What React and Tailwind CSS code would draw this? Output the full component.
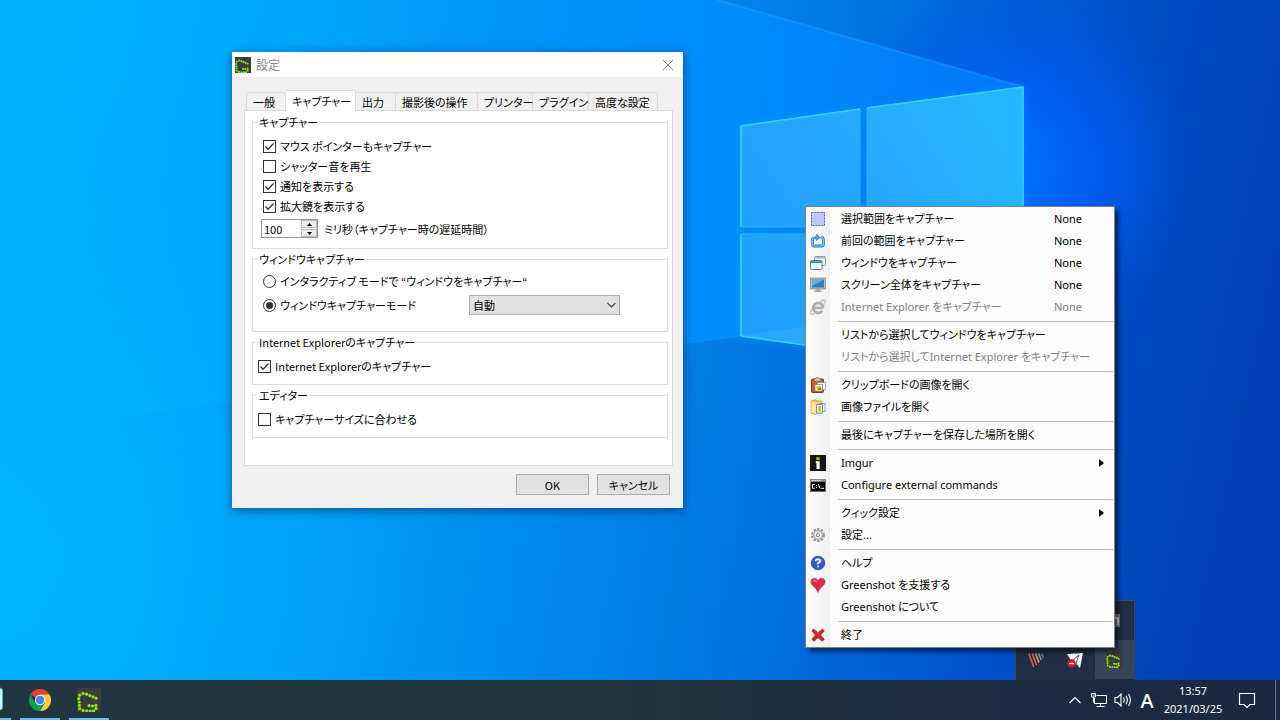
import React, { useState } from "react";

const UI = "font-['Noto_Sans_CJK_JP',sans-serif] [font-feature-settings:'palt']";
const MENU = "font-['Noto_Sans','Noto_Sans_CJK_JP',sans-serif] [font-feature-settings:'palt']";

function Wallpaper() {
  return (
    <svg className="absolute inset-0 h-full w-full" viewBox="0 0 1280 720" preserveAspectRatio="xMidYMid slice" aria-hidden="true">
      <defs>
        <linearGradient id="base" x1="0" y1="0.3" x2="1" y2="0.42">
          <stop offset="0" stopColor="#00b2fe" />
          <stop offset="0.2" stopColor="#00a6fa" />
          <stop offset="0.45" stopColor="#008ef2" />
          <stop offset="0.62" stopColor="#0078e6" />
          <stop offset="0.82" stopColor="#0050cc" />
          <stop offset="1" stopColor="#0040b4" />
        </linearGradient>
        <radialGradient id="glow" gradientUnits="userSpaceOnUse" cx="1010" cy="170" r="190">
          <stop offset="0" stopColor="#0070ff" />
          <stop offset="0.4" stopColor="#0064ff" stopOpacity="0.75" />
          <stop offset="1" stopColor="#0054e0" stopOpacity="0" />
        </radialGradient>
        <radialGradient id="corner" gradientUnits="userSpaceOnUse" cx="0" cy="560" r="520">
          <stop offset="0" stopColor="#00b8ff" />
          <stop offset="1" stopColor="#00a8f8" stopOpacity="0" />
        </radialGradient>
        <linearGradient id="beam" gradientUnits="userSpaceOnUse" x1="300" y1="0" x2="1023" y2="0">
          <stop offset="0" stopColor="#0098ff" stopOpacity="0" />
          <stop offset="0.5" stopColor="#0092ff" stopOpacity="0.8" />
          <stop offset="1" stopColor="#0080ff" stopOpacity="0.7" />
        </linearGradient>
        <linearGradient id="floor" gradientUnits="userSpaceOnUse" x1="0" y1="0" x2="1100" y2="0">
          <stop offset="0" stopColor="#00a0f8" stopOpacity="0.05" />
          <stop offset="0.6" stopColor="#0078dc" stopOpacity="0.25" />
          <stop offset="1" stopColor="#0058cc" stopOpacity="0" />
        </linearGradient>
        <linearGradient id="pane" gradientUnits="userSpaceOnUse" x1="740" y1="340" x2="1023" y2="150">
          <stop offset="0" stopColor="#1e9fff" />
          <stop offset="0.5" stopColor="#24a6ff" />
          <stop offset="1" stopColor="#26b6ff" />
        </linearGradient>
        <filter id="soft" x="-20%" y="-20%" width="140%" height="140%"><feGaussianBlur stdDeviation="3" /></filter>
      </defs>
      <rect width="1280" height="720" fill="url(#base)" />
      <rect width="1280" height="720" fill="url(#corner)" />
      <rect width="1280" height="720" fill="url(#glow)" />
      <path d="M300 0H717L1023 87V240L741 336 300 392Z" fill="url(#beam)" />
      <path d="M0 430 741 336 1023 376 1280 720H0Z" fill="url(#floor)" />
      <path d="M717 0 1023 87" stroke="#1f9cff" strokeWidth="2" opacity="0.5" />
      <path d="M0 430 741 336" stroke="#18b4ff" strokeWidth="1.5" opacity="0.25" />
      <path d="M741 126 1023 87V376L741 336Z" fill="none" stroke="#20b8ff" strokeWidth="4" opacity="0.3" filter="url(#soft)" />
      <path d="M741 126 860 109V227H741Z M867 108 1023 87V227H867Z M741 234H860V353L741 336Z M867 234H1023V376L867 354Z" fill="url(#pane)" stroke="#27b8ff" strokeWidth="1" />
      <path d="M741 336 861 318V353Z" fill="#46c0ff" opacity="0.25" />
      <path d="M741 227V126L860 109M741 336V234M867 108 1023 87V231M741 336 861 353" fill="none" stroke="#32d4ff" strokeWidth="1.500" />
    </svg>
  );
}

function GreenshotIcon({ className }) {
  const dots = [[6, 5.4], [9.6, 6.2], [12.8, 7.6], [16, 8.8], [19, 10.2], [2.6, 7.2], [1.8, 10.6], [2.2, 14], [2.4, 17.4], [2.6, 20.6], [6, 22.4], [9.6, 22.8], [13.2, 23], [16.6, 22.8], [19, 20.4], [12, 17.6], [15.4, 18], [18.8, 17.4]];
  return (
    <svg className={className} viewBox="0 0 24 24" aria-hidden="true">
      <rect width="24" height="24" fill="#3c3d3b" />
      <g fill="#86e810">{dots.map(([x, y]) => <circle key={x + "-" + y} cx={x} cy={y} r="1.6" />)}</g>
    </svg>
  );
}

function Check({ label, checked }) {
  return (
    <label className="flex h-5 items-center gap-1">
      <span className="grid h-[13px] w-[13px]">
        <input type="checkbox" defaultChecked={checked} className="peer col-start-1 row-start-1 m-0 h-[13px] w-[13px] appearance-none border border-[#333] bg-white" />
        <svg className="pointer-events-none invisible col-start-1 row-start-1 h-[13px] w-[13px] peer-checked:visible" viewBox="0 0 13 13" fill="none" stroke="#333" strokeWidth="1.3" aria-hidden="true"><path d="M2.500 6.500 5 9.200 10.500 3.500" /></svg>
      </span>
      <span>{label}</span>
    </label>
  );
}

function Radio({ label, value, checked }) {
  return (
    <label className="flex h-6 items-center gap-1">
      <span className="grid h-[13px] w-[13px]">
        <input type="radio" name="window-mode" value={value} defaultChecked={checked} className="peer col-start-1 row-start-1 m-0 h-[13px] w-[13px] appearance-none rounded-full border border-[#333] bg-white" />
        <span className="pointer-events-none invisible col-start-1 row-start-1 m-auto h-[7px] w-[7px] rounded-full bg-[#333] peer-checked:visible" />
      </span>
      <span>{label}</span>
    </label>
  );
}

function Group({ title, className, children }) {
  return (
    <fieldset className="min-w-0 border border-[#dcdcdc]">
      <legend className="ml-[5px] px-px leading-3">{title}</legend>
      <div className={className}>{children}</div>
    </fieldset>
  );
}

const TABS = [
  ["一般", "w-[40px]"],
  ["キャプチャー", "w-[70px]"],
  ["出力", "w-[40px]"],
  ["撮影後の操作", "w-[82px]"],
  ["プリンター", "w-[55px]"],
  ["プラグイン", "w-[56px]"],
  ["高度な設定", "w-[69px]"],
];

function SettingsDialog() {
  const [delay, setDelay] = useState(100);
  const [tab, setTab] = useState("キャプチャー");
  return (
    <section role="dialog" aria-label="設定" className={"absolute left-[232px] top-[52px] w-[451px] bg-[#f0f0f0] text-[11px] text-black shadow-[0_2px_10px_rgba(0,20,60,0.55)] " + UI}>
      <header className="flex h-[25px] items-center bg-white px-[3px] text-[#8a8a8a]">
        <GreenshotIcon className="h-4 w-4" />
        <h1 className="ml-[5px] flex-1 text-xs">設定</h1>
        <button type="button" aria-label="閉じる" className="mr-[6px] h-3 w-3">
          <svg className="h-3 w-3" viewBox="0 0 12 12" fill="none" stroke="#888" aria-hidden="true"><path d="m1 1 10 10M11 1 1 11" /></svg>
        </button>
      </header>
      <div className="pb-[13px] pl-3 pr-[10px] pt-[13px]">
        <div role="tablist" className="flex h-5 items-end pl-[2px]">
          {TABS.map(([name, width]) => (
            <button key={name} type="button" role="tab" aria-selected={tab === name} onClick={() => setTab(name)}
              className={width + " shrink-0 whitespace-nowrap border-t border-r border-[#dadada] pl-[6px] text-left leading-4 first:border-l " + (tab === name ? "-mb-px h-[21px] bg-white" : "h-[18px]")}>
              {name}
            </button>
          ))}
        </div>
        <div role="tabpanel" className="flex flex-col gap-1 border border-[#dadada] bg-white pb-[27px] pl-[7px] pr-1 pt-[5px]">
          <Group title="キャプチャー" className="pb-[10px] pl-[10px] pt-2">
            <Check label="マウス ポインターもキャプチャー" checked />
            <Check label="シャッター音を再生" />
            <Check label="通知を表示する" checked />
            <Check label="拡大鏡を表示する" checked />
            <div className="-ml-[2px] mt-[3px] flex items-center">
              <div className="flex h-[19px] w-[57px] border border-[#999] bg-white">
                <input id="delay" type="number" value={delay} onChange={(e) => setDelay(Number(e.target.value))} className="min-w-0 flex-1 bg-transparent pl-[2px] leading-4 outline-none [appearance:textfield] [&::-webkit-inner-spin-button]:appearance-none" />
                <div className="flex w-4 flex-col gap-px">
                  <button type="button" aria-label="増やす" onClick={() => setDelay(delay + 1)} className="flex flex-1 items-center justify-center border border-[#b8b8b8] bg-[#ececec]"><svg className="h-[3px] w-[5px]" viewBox="0 0 5 3" aria-hidden="true"><path d="M0 3 2.500 0 5 3Z" /></svg></button>
                  <button type="button" aria-label="減らす" onClick={() => setDelay(delay - 1)} className="flex flex-1 items-center justify-center border border-[#b8b8b8] bg-[#ececec]"><svg className="h-[3px] w-[5px]" viewBox="0 0 5 3" aria-hidden="true"><path d="M0 0 2.500 3 5 0Z" /></svg></button>
                </div>
              </div>
              <label htmlFor="delay" className="ml-[6px] leading-4">ミリ秒（キャプチャー時の遅延時間）</label>
            </div>
          </Group>
          <Group title="ウィンドウキャプチャー" className="pb-[14px] pl-[10px] pr-[47px] pt-1">
            <Radio value="interactive" label="インタラクティブ モードで “ウィンドウをキャプチャー“" />
            <div className="flex items-center justify-between">
              <Radio value="auto" label="ウィンドウキャプチャーモード" checked />
              <div className="grid h-5 w-[151px]">
                <select aria-label="ウィンドウキャプチャーモード" className="col-start-1 row-start-1 appearance-none border border-[#adadad] bg-[#e1e1e1] pl-[3px] leading-4">
                  <option>自動</option>
                </select>
                <svg className="pointer-events-none col-start-1 row-start-1 mr-1 h-[6px] w-[9px] self-center justify-self-end" viewBox="0 0 9 6" fill="none" stroke="#444" strokeWidth="1.100" aria-hidden="true"><path d="m.5 1 4 4 4-4" /></svg>
              </div>
            </div>
          </Group>
          <Group title="Internet Explorerのキャプチャー" className="pb-2 pl-[5px] pt-2">
            <Check label="Internet Explorerのキャプチャー" checked />
          </Group>
          <Group title="エディター" className="pb-2 pl-[5px] pt-2">
            <Check label="キャプチャーサイズに合わせる" />
          </Group>
        </div>
        <div className="mt-2 flex justify-end gap-2 pr-[3px]">
          <button type="button" className="h-[21px] w-[73px] border border-[#adadad] bg-[#e1e1e1] leading-4">OK</button>
          <button type="button" className="h-[21px] w-[73px] border border-[#adadad] bg-[#e1e1e1] leading-4">キャンセル</button>
        </div>
      </div>
    </section>
  );
}

const ic = "h-4 w-4";
const ICONS = {
  region: (
    <svg className={ic} viewBox="0 0 16 16"><rect x="1.500" y="1.500" width="13" height="13" fill="#bccaf6" stroke="#4a5cc8" strokeDasharray="2 1" /></svg>
  ),
  last: (
    <svg className={ic} viewBox="0 0 16 16" fill="none">
      <path d="M3.600 5.200Q2.600 5.200 2.600 6.400V11.200Q2.600 13 4.400 13H11.600Q13.400 13 13.400 11.200V6.400Q13.400 4.800 11.800 4.600" stroke="#2f7fc0" strokeWidth="2.800" strokeLinecap="round" />
      <path d="M3.600 5.200Q2.600 5.200 2.600 6.400V11.200Q2.600 13 4.400 13H11.600Q13.400 13 13.400 11.200V6.400Q13.400 4.800 11.800 4.600" stroke="#86c8f2" strokeWidth="1.200" strokeLinecap="round" />
      <path d="M3.800 5.800Q4.500 3.300 6.500 3.300V1.200L10 4.400 6.500 7.600V5.800Q5 5.600 3.800 5.800Z" fill="#4a9cd8" stroke="#2f7fc0" strokeWidth=".7" />
    </svg>
  ),
  window: (
    <svg className={ic} viewBox="0 0 16 16">
      <rect x="4.500" y="1.500" width="11" height="9" rx="1" fill="#f4f4f4" stroke="#8e9aa2" /><path d="M5 2h10v1.500H5z" fill="#b4bcc2" />
      <rect x=".5" y="5.500" width="11.500" height="9" rx="1" fill="#f4faff" stroke="#4384b4" /><path d="M.500 5.500h11.500v2.500H.500z" fill="#3b96d4" />
    </svg>
  ),
  screen: (
    <svg className={ic} viewBox="0 0 16 16">
      <rect x=".5" y="1" width="15" height="11" fill="#b9bdc0" stroke="#8a8e92" strokeWidth=".8" />
      <rect x="2" y="2.500" width="12" height="8" fill="#2f82c0" /><path d="M2 2.500h12L2 9z" fill="#68b0e0" />
      <path d="M6.500 12h3v1.500h2V15h-7v-1.500h2z" fill="#9a9da0" />
    </svg>
  ),
  ie: (
    <svg className={ic} viewBox="0 0 16 16" fill="none">
      <path d="M13.400 8.800H4.400M13.200 8.800A5 5 0 1 0 12.300 11.800" stroke="#adadad" strokeWidth="2.800" />
      <path d="M10.500 2.400Q15 .2 15.200 2 15.300 3.300 13.800 5.500M3 8.500Q-.8 14.400 1.200 15.200 3 15.600 6.500 13.500" stroke="#bdbdbd" strokeWidth="1.400" />
    </svg>
  ),
  clipboard: (
    <svg className={ic} viewBox="0 0 16 16">
      <rect x="1.500" y="2" width="12" height="13.500" rx="1" fill="#b0602c" stroke="#7c3c18" /><path d="M4.500 1.500h2V.5h2v1h2v2.500h-6z" fill="#c8ccd0" stroke="#777" strokeWidth=".6" />
      <path d="M3.500 4.500h8v9h-8z" fill="#b8683a" />
      <path d="M7.500 5.500h8v7h-8z" fill="#fff" stroke="#758aa0" strokeWidth=".7" /><path d="M5 7.500h7.500v6.500H5z" fill="#fff" stroke="#777" strokeWidth=".7" /><path d="M6.300 8.800h5v4h-5z" fill="#f0c428" /><path d="M9 10.600h2.300v2.200H8z" fill="#4f8a3c" />
    </svg>
  ),
  folder: (
    <svg className={ic} viewBox="0 0 16 16">
      <path d="M1 2 6 .8V2h6v12H6v1.500L1 14z" fill="#f4cf6a" stroke="#c49a34" strokeWidth=".8" /><path d="M1.500 2.500 6 4.500v10.500L1.500 13.500z" fill="#ffe79c" />
      <path d="M9 4.500h6v8H9z" fill="#fff" stroke="#5b8ab4" strokeWidth=".8" /><path d="M6.500 5.500h6V14h-6z" fill="#fff" stroke="#4f7fa8" strokeWidth=".8" /><path d="M7.800 7h3.400v5.800H7.800z" fill="#f0c428" />
    </svg>
  ),
  imgur: (
    <svg className={ic} viewBox="0 0 16 16"><rect width="16" height="16" fill="#161616" /><circle cx="8" cy="3.600" r="1.900" fill="#85bf25" /><path d="M5.800 6.300h3.900v7.700H6.500V8.200h-.7z" fill="#fff" /></svg>
  ),
  cmd: (
    <svg className={ic} viewBox="0 0 16 16">
      <rect x=".4" y="2.400" width="15.200" height="12.200" fill="#000" stroke="#777" strokeWidth=".8" /><path d="M.8 2.800h14.400v1.800H.8z" fill="#c9ced4" /><path d="M11.500 3.100h1v1h-1zM13.500 3.100h1v1h-1z" fill="#555" />
      <path d="M4.800 7.500H2.500v3.800h2.300M6.500 8v.9M6.500 10.200v.9M8.300 7l1.700 4.500M11 11.300h3" fill="none" stroke="#fff" />
    </svg>
  ),
  gear: (
    <svg className={ic} viewBox="0 0 16 16" fill="none">
      <circle cx="8" cy="8" r="6" stroke="#8d9094" strokeWidth="1.800" strokeDasharray="2.400 1.400" /><circle cx="8" cy="8" r="4.400" fill="#d8dadc" stroke="#a2a5a8" strokeWidth="1.400" />
      <circle cx="8" cy="8" r="3" stroke="#f2f2f2" /><circle cx="8" cy="8" r="1.600" fill="#fff" stroke="#8d9094" />
    </svg>
  ),
  help: (
    <svg className={ic} viewBox="0 0 16 16" fill="none">
      <circle cx="8" cy="8" r="6.800" fill="#3258c8" stroke="#2846a0" strokeWidth=".8" /><path d="M2.400 6Q8-1 13.600 6 8 8 2.400 6Z" fill="#7c9ce8" opacity=".5" />
      <path d="M5.700 6Q5.800 4.200 8 4.200T10.300 6Q10.300 7.200 8 8.300V9.500" stroke="#fff" strokeWidth="1.600" /><path d="M7.200 10.700h1.600v1.600H7.200z" fill="#fff" />
    </svg>
  ),
  heart: (
    <svg className={ic} viewBox="0 0 16 16"><path d="M8 15.500Q6.500 11.500 3 8.700C-.8 5.300 1 1.300 4.300 1.300 6.200 1.300 7.400 2.300 8 3.600 8.600 2.300 9.800 1.300 11.700 1.300 15 1.300 16.800 5.300 13 8.700 9.500 11.500 8 15.500 8 15.500Z" fill="#e0253f" stroke="#b0506a" strokeWidth=".6" /><path d="M2.200 4.500Q3 2.200 5 2.500 6.800 3 7.500 5.500 5 4.500 2.200 4.500Z" fill="#ff8c9c" opacity=".7" /></svg>
  ),
  exit: (
    <svg className={ic} viewBox="0 0 16 16"><path d="M3.500 2 8 5.600 12.500 2 14.200 4 10.500 8l3.700 4.300-2 2L8 10.500 4 14.300l-2.200-2L5.500 8 1.800 4z" fill="#cf2020" stroke="#9c1414" strokeWidth=".7" /><path d="M3.500 3 8 7l4.500-4" fill="none" stroke="#e85848" strokeWidth=".8" /></svg>
  ),
};

const MENU_GROUPS = [
  [
    { label: "選択範囲をキャプチャー", icon: "region", key: "None" },
    { label: "前回の範囲をキャプチャー", icon: "last", key: "None" },
    { label: "ウィンドウをキャプチャー", icon: "window", key: "None" },
    { label: "スクリーン全体をキャプチャー", icon: "screen", key: "None" },
    { label: "Internet Explorer をキャプチャー", icon: "ie", key: "None", disabled: true },
  ],
  [{ label: "リストから選択してウィンドウをキャプチャー" }, { label: "リストから選択してInternet Explorer をキャプチャー", disabled: true }],
  [{ label: "クリップボードの画像を開く", icon: "clipboard" }, { label: "画像ファイルを開く", icon: "folder" }],
  [{ label: "最後にキャプチャーを保存した場所を開く" }],
  [{ label: "Imgur", icon: "imgur", sub: true }, { label: "Configure external commands", icon: "cmd" }],
  [{ label: "クィック設定", sub: true }, { label: "設定...", icon: "gear" }],
  [{ label: "ヘルプ", icon: "help" }, { label: "Greenshot を支援する", icon: "heart" }, { label: "Greenshot について" }],
  [{ label: "終了", icon: "exit" }],
];

function ContextMenu() {
  return (
    <div role="menu" aria-label="Greenshot" className={"absolute bottom-[32px] left-[805px] w-[310px] border border-[#808080] bg-[linear-gradient(to_right,#fdfdfd_0,#f0f0f0_24px,#fdfdfd_24px)] py-px text-[11px] text-black shadow-[4px_4px_4px_rgba(0,0,0,0.5)] " + MENU}>
      {MENU_GROUPS.map((items, i) => (
        <React.Fragment key={items[0].label}>
          {i > 0 && <div role="separator" className="ml-8 mr-px flex h-[6px] items-center"><div className="h-px flex-1 bg-[#bdbdbd]" /></div>}
          {items.map((item) => (
            <button key={item.label} type="button" role="menuitem" disabled={item.disabled} className="flex h-[22px] w-full items-center pl-1 text-left leading-4 disabled:text-[#808080]">
              <span className="h-4 w-4 shrink-0" aria-hidden="true">{item.icon && ICONS[item.icon]}</span>
              <span className="ml-[15px] flex-1 whitespace-nowrap">{item.label}</span>
              {item.key && <span className="w-[60px]">{item.key}</span>}
              {item.sub && <svg className="mr-[10px] h-[8px] w-[5px]" viewBox="0 0 5 8" aria-hidden="true"><path d="M0 0 5 4 0 8Z" /></svg>}
            </button>
          ))}
        </React.Fragment>
      ))}
    </div>
  );
}

function TrayPopup() {
  const cell = "flex h-[39px] items-center justify-center";
  return (
    <div className="absolute bottom-0 left-[1015px] grid w-[120px] grid-cols-3 border border-b-0 border-[#3a4a5c] bg-[#202f45] pb-px">
      <span className={cell} />
      <span className={cell} />
      <button type="button" aria-label="入力" className={cell}>
        <svg className="h-4 w-4" viewBox="0 0 16 16" aria-hidden="true"><rect y="1" width="14" height="13" fill="#777" /><path d="M3 12V5h9v7M8 5v7" stroke="#eee" strokeWidth="1.600" fill="none" /></svg>
      </button>
      <button type="button" aria-label="ストライプ" className={cell}>
        <svg className="h-4 w-4" viewBox="0 0 16 16" fill="none" strokeWidth="1.600" aria-hidden="true"><path d="m.8 1.500 5 13.500" stroke="#e0614a" /><path d="m4.200 1.500 4.300 11.500" stroke="#e0704a" /><path d="m7.500 1.500 3.500 9" stroke="#e0a060" /><path d="m10.800 1.500 2.300 6.500" stroke="#6fa890" /><path d="m13.600 1.500 1.600 4.500" stroke="#4878c0" /></svg>
      </button>
      <button type="button" aria-label="通知停止" className={cell}>
        <svg className="h-[18px] w-[18px]" viewBox="0 0 18 18" aria-hidden="true"><path d="M1 3 17 2l-3 15-4-4-3 1-3-6Z" fill="#fff" /><path d="m7 9 6-5-3 8 2 3" stroke="#44546a" fill="none" /><circle cx="5.500" cy="12.500" r="4.300" fill="#d81828" /><path d="M3 12.500h5" stroke="#fff" strokeWidth="1.300" /></svg>
      </button>
      <button type="button" aria-label="Greenshot" className={cell + " bg-[#37455a]"}><GreenshotIcon className="h-4 w-4" /></button>
    </div>
  );
}

function Taskbar() {
  const app = "flex h-10 w-10 items-center justify-center border-b-2 border-[#76b9ed] pt-[2px]";
  return (
    <footer className="flex h-10 items-stretch bg-[linear-gradient(to_right,#20373f,#20353f_45%,#1b2b43_80%,#1a2942)] text-white">
      <button type="button" aria-label="エクスプローラー" className="flex w-[11px] items-center border-b-2 border-[#76b9ed]">
        <svg className="h-6 w-[3px]" viewBox="0 0 3 24" aria-hidden="true"><path d="M0 1Q2.500 1 2.500 4V20Q2.500 23 0 23" fill="#dff2ff" stroke="#3fb0f0" /></svg>
      </button>
      <button type="button" aria-label="Google Chrome" className={app + " ml-[9px]"}>
        <svg className="h-6 w-6" viewBox="0 0 24 24" aria-hidden="true">
          <path d="M12 12 2.470 6.500A11 11 0 0 1 21.530 6.500Z" fill="#db4437" />
          <path d="M12 6.500H21.530A11 11 0 0 1 12 23L17 14.500Z" fill="#ffcd40" />
          <path d="M2.470 6.500 7.200 14.700 12 17.200 16 15.800 12 23A11 11 0 0 1 2.470 6.500Z" fill="#0f9d58" />
          <circle cx="12" cy="12" r="5.200" fill="#f1f1f1" /><circle cx="12" cy="12" r="4.200" fill="#4285f4" />
        </svg>
      </button>
      <button type="button" aria-label="Greenshot" className={app + " ml-[9px]"}><GreenshotIcon className="h-6 w-6" /></button>
      <div className="flex-1" />
      <button type="button" aria-label="隠れているインジケーター" className="flex w-6 items-center justify-center">
        <svg className="h-[14px] w-[14px]" viewBox="0 0 14 14" fill="none" stroke="#fff" strokeWidth="1.200" aria-hidden="true"><path d="m1.500 10 5.500-5.500 5.500 5.500" /></svg>
      </button>
      <button type="button" aria-label="ネットワーク" className="flex w-6 items-center justify-center">
        <svg className="h-4 w-4" viewBox="0 0 16 16" fill="none" stroke="#fff" aria-hidden="true"><path d="M5.500 3.500h10v8H3.500V6M9.500 11.500v3M5.500 14.500h8M.5 1.500h4v3.500h-4zM2.500 5v5.500M1.500 3h2" /></svg>
      </button>
      <button type="button" aria-label="音量" className="flex w-6 items-center justify-center">
        <svg className="h-4 w-[18px]" viewBox="0 0 18 16" fill="none" stroke="#fff" strokeWidth="1.100" aria-hidden="true"><path d="M1 5.500h2.500L7 2v12l-3.500-3.500H1zM9.500 5.500q1.500 2.500 0 5M12 3.700q2.700 4.300 0 8.600M14.500 2q3.700 6 0 12" /></svg>
      </button>
      <button type="button" aria-label="入力モード" className="flex w-6 items-center justify-center pt-[2px] font-['Noto_Sans',sans-serif] text-xl font-medium leading-6">A</button>
      <time dateTime="2021-03-25T13:57" className={"flex w-[68px] flex-col items-center justify-center text-[11px] leading-[18px] " + MENU}>
        <span>13:57</span>
        <span>2021/03/25</span>
      </time>
      <button type="button" aria-label="通知" className="flex w-10 items-center justify-center">
        <svg className="h-[18px] w-[18px]" viewBox="0 0 18 18" fill="none" stroke="#fff" strokeWidth="1.200" aria-hidden="true"><path d="M1.500 2.500h15v11H12L9 16.500 6 13.500H1.500z" /></svg>
      </button>
      <button type="button" aria-label="デスクトップの表示" className="ml-2 w-[5px] border-l border-[#66738a]" />
    </footer>
  );
}

export default function App() {
  return (
    <div className="flex min-h-screen flex-col overflow-hidden bg-[#0078e8]">
      <main className="relative flex-1">
        <div className="absolute inset-x-0 top-0 h-screen overflow-hidden"><Wallpaper /></div>
        <SettingsDialog />
        <TrayPopup />
        <ContextMenu />
      </main>
      <div className="relative"><Taskbar /></div>
    </div>
  );
}
